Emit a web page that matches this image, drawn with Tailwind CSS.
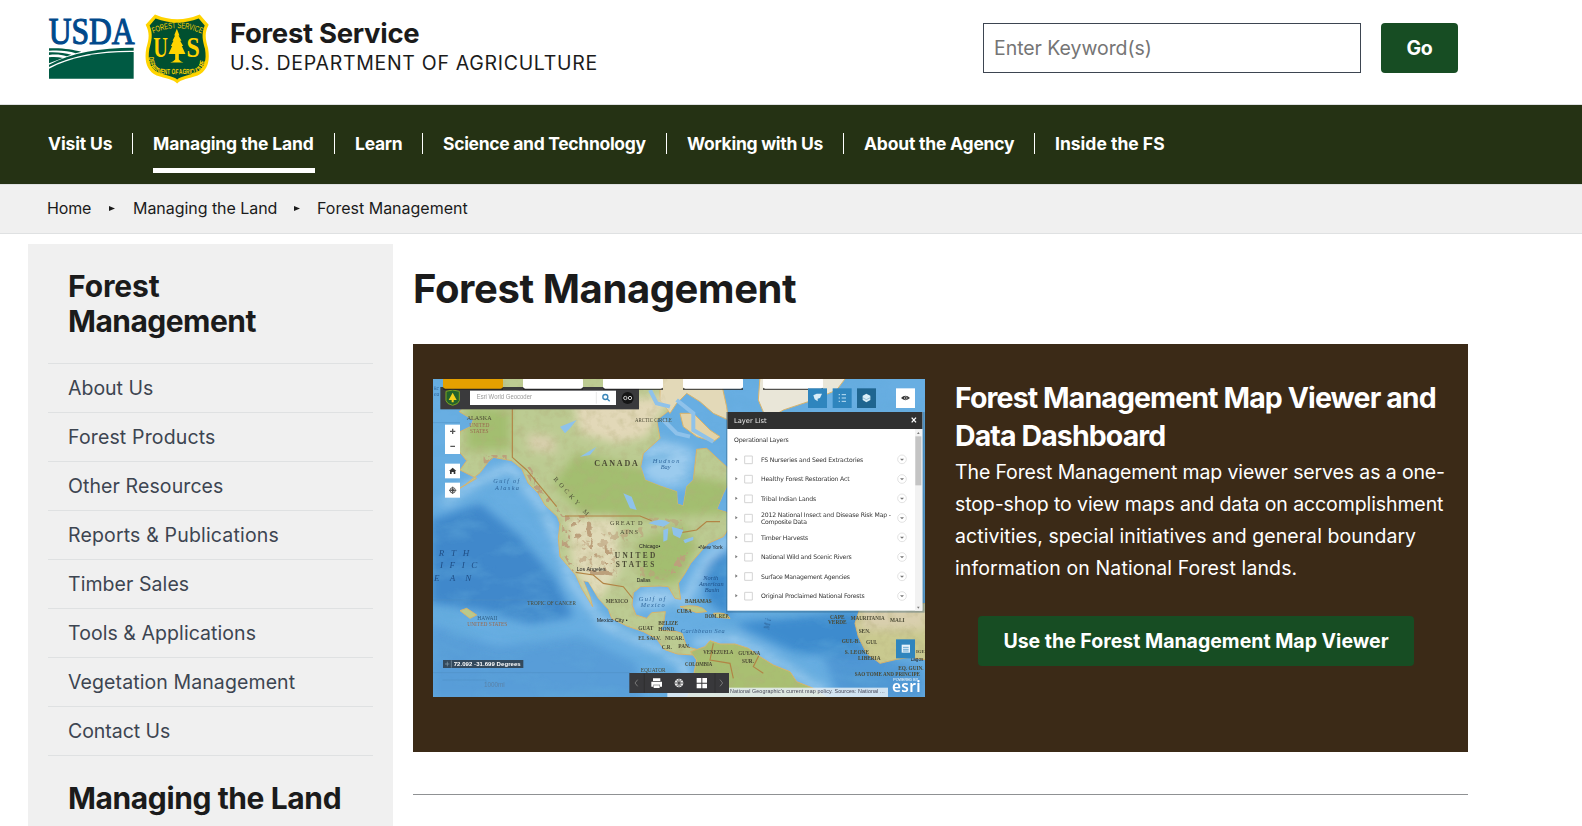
<!DOCTYPE html>
<html lang="en">
<head>
<meta charset="utf-8">
<title>Forest Management</title>
<script src="https://cdn.jsdelivr.net/npm/@tailwindcss/browser@4"></script>
</head>
<body class="h-screen overflow-hidden bg-white font-['Inter','Liberation_Sans',sans-serif] text-[19.5px] text-[#1b1b1b]">

<header class="flex h-[104px] items-start pl-12">
  <svg class="mt-[12px] h-[68px] w-[87px] overflow-visible" viewBox="24 12 261 204" aria-label="USDA">
    <text x="26" y="108" font-family="Liberation Serif, serif" font-size="111" textLength="258" lengthAdjust="spacingAndGlyphs" fill="#00498b" stroke="#00498b" stroke-width="3.5">USDA</text>
    <g fill="#005a43">
      <path d="M27 182C90 148 175 131 281 132V212H27Z"/>
      <path d="M27 170C95 134 180 119 281 119V128C190 127 105 138 27 177Z"/>
      <path d="M27 121C70 119 96 125 124 131L107 136C85 128 60 126 27 128Z"/>
      <path d="M27 133C55 132 75 135 94 140L80 145C62 139 45 139 27 141Z"/>
      <path d="M27 148C42 146 54 147 69 150L27 166Z"/>
    </g>
  </svg>
  <svg class="mt-[14px] ml-[10px] h-[70px] w-[64px]" viewBox="315 18 193 210" aria-label="Forest Service shield">
    <defs>
      <path id="arcTop" d="M340 76Q412 44 484 76"/>
      <path id="arcBottom" d="M326 148C328 216 380 194 412 200C444 194 496 216 498 148"/>
    </defs>
    <path fill="#ffd400" d="M345 19Q412 48 480 19L507 50C493 76 498 96 505 120C512 160 504 188 474 203C446 213 424 214 412 227C400 214 378 213 350 203C320 188 312 160 319 120C326 96 331 76 317 50Z"/>
    <path fill="#005030" d="M347 31Q412 56 477 31L495 52C484 78 489 98 496 123C501 156 496 181 469 194C443 204 424 205 412 215C400 205 381 204 355 194C328 181 323 156 328 123C335 98 340 78 329 52Z"/>
    <g fill="#ffd400" font-family="Liberation Sans Narrow, Liberation Sans, sans-serif">
      <text font-size="25"><textPath href="#arcTop" textLength="150" lengthAdjust="spacingAndGlyphs">FOREST SERVICE</textPath></text>
      <text font-size="23" font-weight="700"><textPath href="#arcBottom" textLength="226" lengthAdjust="spacingAndGlyphs">DEPARTMENT OF AGRICULTURE</textPath></text>
      <g font-family="Liberation Serif, serif" font-size="86" font-weight="700">
        <text x="340" y="148" textLength="44" lengthAdjust="spacingAndGlyphs">U</text>
        <text x="440" y="148" textLength="40" lengthAdjust="spacingAndGlyphs">S</text>
      </g>
      <path d="M411 62L419 82H416L425 98H421L430 114H426L437 138H417V155Q423 162 431 164H391Q400 162 406 155V138H386L397 114H393L401 98H398L406 82H403Z"/>
    </g>
  </svg>
  <div class="mt-[18px] ml-[21px] whitespace-nowrap">
    <div class="text-[27.5px] leading-[30px] font-bold tracking-[-0.3px]">Forest Service</div>
    <div class="pt-px leading-7 tracking-[0.7px]">U.S. DEPARTMENT OF AGRICULTURE</div>
  </div>
  <form class="mt-[23px] mr-[124px] ml-auto flex gap-5">
    <input class="h-[50px] w-[378px] border border-[#3d4551] px-2.5 tracking-[-0.05px] placeholder-[#757575]" placeholder="Enter Keyword(s)">
    <button type="button" class="h-[50px] w-[77px] rounded bg-[#174d23] pt-0.5 font-bold tracking-[-0.2px] text-white">Go</button>
  </form>
</header>

<nav class="h-[80px] border-t border-[#dfe1e2] bg-[#253214] pt-7 pl-12 text-[17.5px] leading-[21px] font-bold text-white">
  <ul class="flex whitespace-nowrap">
    <li class="w-[85px] border-r border-white tracking-[-0.14px]">Visit Us</li>
    <li class="w-[202px] border-r border-white pl-5"><span class="-mb-[19px] block w-[162px] border-b-5 border-white pb-[14px] tracking-[-0.16px]">Managing the Land</span></li>
    <li class="w-[88px] border-r border-white pl-5 tracking-[-0.26px]">Learn</li>
    <li class="w-[244px] border-r border-white pl-5 tracking-[-0.31px]">Science and Technology</li>
    <li class="w-[177px] border-r border-white pl-5 tracking-[-0.28px]">Working with Us</li>
    <li class="w-[191px] border-r border-white pl-5 tracking-[-0.21px]">About the Agency</li>
    <li class="pl-5">Inside the FS</li>
  </ul>
</nav>

<div class="flex h-[50px] items-center border-y border-[#dfe1e2] bg-[#f0f0f0] pb-0.5 pl-[47px] text-base whitespace-nowrap">
  <span class="w-[62px] tracking-[-0.15px]">Home</span>
  <svg class="h-[5px] w-6" viewBox="0 0 24 5"><path d="M0 0L6 2.5L0 5Z" fill="#1b1b1b"/></svg>
  <span class="w-[161px] tracking-[-0.05px]">Managing the Land</span>
  <svg class="h-[5px] w-[23px]" viewBox="0 0 23 5"><path d="M0 0L6 2.5L0 5Z" fill="#1b1b1b"/></svg>
  <span>Forest Management</span>
</div>

<div class="flex items-start pt-2.5 pl-7">
  <aside class="h-[600px] w-[365px] shrink-0 bg-[#f0f0f0] px-5">
    <h2 class="pt-[25px] pb-6 pl-5 text-[30px] leading-[35px] font-bold tracking-[-0.53px]"><span class="tracking-[-0.1px]">Forest</span><br>Management</h2>
    <ul class="border-b border-[#dfe1e2] leading-[48px] text-[#3d4551]">
      <li class="border-t border-[#dfe1e2] pl-5">About Us</li>
      <li class="border-t border-[#dfe1e2] pl-5 tracking-[0.15px]">Forest Products</li>
      <li class="border-t border-[#dfe1e2] pl-5 tracking-[0.1px]">Other Resources</li>
      <li class="border-t border-[#dfe1e2] pl-5 tracking-[0.17px]">Reports &amp; Publications</li>
      <li class="border-t border-[#dfe1e2] pl-5 tracking-[0.07px]">Timber Sales</li>
      <li class="border-t border-[#dfe1e2] pl-5 tracking-[0.07px]">Tools &amp; Applications</li>
      <li class="border-t border-[#dfe1e2] pl-5 tracking-[0.1px]">Vegetation Management</li>
      <li class="border-t border-[#dfe1e2] pl-5 tracking-[-0.05px]">Contact Us</li>
    </ul>
    <h2 class="pt-[25px] pl-5 text-[30px] leading-[35px] font-bold tracking-[-0.4px] whitespace-nowrap">Managing the Land</h2>
  </aside>

  <main class="ml-5 w-[1055px]">
    <h1 class="pt-[25px] pb-[35px] text-[40px] leading-10 font-bold tracking-[-0.4px]">Forest Management</h1>

    <section class="flex h-[408px] gap-[30px] bg-[#3b2a17] pt-[35px] pl-5 text-white">
      <svg class="h-[318px] w-[492px] shrink-0" viewBox="9 27 1476 954" preserveAspectRatio="none" aria-label="Map viewer">
        <defs>
          <filter id="soft" x="-5%" y="-5%" width="110%" height="110%"><feGaussianBlur stdDeviation="14"/></filter>
          <filter id="edge"><feGaussianBlur stdDeviation="1.3"/></filter>
          <filter id="terrain" x="0" y="0" width="100%" height="100%">
            <feTurbulence type="fractalNoise" baseFrequency="0.035" numOctaves="4" seed="8"/>
            <feColorMatrix values="0 0 0 0 .45  0 0 0 0 .42  0 0 0 0 .2  2.2 0 0 0 -1"/>
          </filter>
          <filter id="sea" x="0" y="0" width="100%" height="100%">
            <feTurbulence type="fractalNoise" baseFrequency="0.008 0.016" numOctaves="5" seed="5"/>
            <feColorMatrix values="0 0 0 0 .12  0 0 0 0 .4  0 0 0 0 .7  2.6 0 0 0 -1.15"/>
          </filter>
          <filter id="forest" x="0" y="0" width="100%" height="100%">
            <feTurbulence type="fractalNoise" baseFrequency="0.045" numOctaves="3" seed="21"/>
            <feColorMatrix values="0 0 0 0 .5  0 0 0 0 .35  0 0 0 0 .2  0 14 0 0 -7.5"/>
          </filter>
          <clipPath id="forestClip"><path d="M160 255H230V280H160ZM280 295L300 290L335 345L400 440L385 450L350 400L320 370ZM398 438L470 435L490 470L510 480L500 560L480 570L475 500L420 505L418 560L440 600L425 605L395 540ZM525 525H545V610H525ZM480 590H550V615H480ZM740 560L775 545L760 600L720 615Z"/></clipPath>
          <clipPath id="sparseClip"><path d="M440 500L640 470V500L560 520V620L450 600ZM650 440L760 450V480L660 475ZM630 590L720 600V630L630 625Z"/></clipPath>
          <path id="land" d="M70 20L110 100L88 125L130 150L122 170L90 185L84 240L110 272L90 300L140 325L60 372L105 345L150 308L175 275L190 262L245 272L275 296L295 340L325 370L345 405L382 440L390 462L385 505L390 560L420 595L437 615L455 655L488 710L480 680L460 632L475 635L505 685L535 718L545 745L590 768L640 785L680 806L702 838L742 852L790 855L800 838L770 830L756 790L740 785L690 780L700 765L706 725L665 728L650 745L618 735L606 705L610 668L632 650L690 648L715 650L735 685L752 688L745 640L765 610L782 580L812 545L835 520L880 500L900 470L900 430L860 418L880 370L900 330L900 300L830 235L800 238L790 330L770 350L760 408L742 402L740 365L690 348L645 330L632 290L640 250L690 205L680 150L720 120L700 70L720 20Z"/>
          <path id="south" d="M782 845L800 870L790 920L780 960L770 990H1200L1150 955L1100 935L1080 905L1030 885L990 860L955 835L915 822L870 822L840 812L825 830Z"/>
          <path id="africa" d="M1290 715L1275 760L1285 800L1310 850L1350 880L1400 868L1440 862L1490 870V700Z"/>
          <clipPath id="landClip"><use href="#land"/><use href="#south"/><use href="#africa"/></clipPath>
        </defs>
        <rect x="9" y="27" width="1476" height="954" fill="#68aee2"/>
        <g filter="url(#soft)">
          <path fill="#3f88cb" d="M0 450L150 400L270 500L370 620L430 740L300 760L150 720L0 700Z"/>
          <path fill="#4a90d0" d="M0 760L200 830L450 800L620 880L640 990H0Z" opacity=".55"/>
          <path fill="#3e8bce" d="M820 580L900 540L900 760L1290 720L1300 860L1100 850L930 770L830 690Z"/>
          <path fill="#4189cb" d="M1180 860L1290 830L1480 900V990H1230Z" opacity=".6"/>
          <path fill="#9bcbee" d="M640 230L690 205L790 240L780 350L700 350L640 320ZM610 670L740 650L730 700L660 720Z"/>
          <path fill="none" stroke="#9bcbee" stroke-width="26" d="M40 395L140 335L240 290L330 400L378 500L430 640L520 760L650 820L760 880L775 985M610 720L660 660L760 700L830 570L900 500M790 820L900 800L1010 860L1180 960"/>
        </g>
        <rect x="9" y="27" width="1476" height="954" filter="url(#sea)" opacity=".42"/>
        <g stroke="#d9b36a" stroke-width="3" filter="url(#edge)">
          <use href="#land" fill="#bccb92"/><use href="#south" fill="#a9bf72"/><use href="#africa" fill="#c9c98f"/>
          <path fill="#e3d9b8" d="M690 20H870L890 110L895 150L850 130L810 95L770 70L740 100L720 130L690 90Z"/>
          <path fill="#e3d3a8" d="M750 130L790 130L840 180L870 200L850 215L800 200L760 170Z"/>
          <path fill="#e9e6d8" d="M990 20H1250L1220 60L1150 90L1060 120L1010 150L985 90Z"/>
          <path fill="#bac98b" d="M750 710Q810 700 830 725L800 728ZM850 730Q890 725 900 745L860 742ZM110 715L140 735L120 745L90 722Z"/>
        </g>
        <g clip-path="url(#landClip)">
          <g filter="url(#soft)">
            <path fill="#a3be70" d="M440 250L620 290L900 340V430L700 440H460L370 340Z"/>
            <path fill="#e2d8b8" d="M430 90L720 80L650 200L560 220L450 190Z"/>
            <path fill="#a3be70" d="M110 110L240 120V240L110 240ZM620 520L760 460L800 530L740 640L640 640Z"/>
            <path fill="#e0dab8" d="M410 440H560L570 600L500 700L430 600Z"/>
            <path fill="#d9cfae" d="M290 190L370 200L380 250L300 240ZM1290 700H1490V780H1290Z"/>
          </g>
          <rect x="9" y="27" width="1476" height="954" filter="url(#terrain)" opacity=".4"/>
          <g clip-path="url(#forestClip)"><rect x="9" y="27" width="1476" height="954" filter="url(#forest)"/></g>
          <g clip-path="url(#sparseClip)" opacity=".6"><rect x="9" y="27" width="1476" height="954" filter="url(#forest)"/></g>
          <path fill="none" stroke="#b28445" stroke-width="3.5" d="M247 85V262L290 300L380 410M405 438H630L665 452M437 607L490 615L520 640L580 650L612 690M740 490L800 480L830 455L870 455M850 820L840 870L900 880L910 925M990 850L970 890L1000 910"/>
          <path fill="#8ec2ea" d="M390 170L440 150L420 175L405 190ZM450 260L500 230L480 255ZM580 370L605 380L620 420L600 415ZM655 460Q690 440 720 458L700 470ZM700 480L715 475L712 510L700 515ZM725 470L760 480L750 505L730 495ZM760 510L790 500V510L765 520Z"/>
        </g>
        <g filter="url(#edge)" fill="none" stroke="#8fc2ea" stroke-width="12"><path d="M740 90L790 130L790 180L850 215M700 150L740 190L780 200M660 60L680 100L720 110"/></g>
        <g font-family="Liberation Serif, serif" fill="#4b4a35" font-size="19">
          <g font-weight="700">
            <text x="493" y="288" font-size="24" textLength="130">CANADA</text>
            <text x="554" y="564" font-size="22" textLength="122">UNITED</text>
            <text x="557" y="590" font-size="22" textLength="116">STATES</text>
          </g>
          <text x="110" y="151" textLength="75" lengthAdjust="spacingAndGlyphs">ALASKA</text>
          <g fill="#9a6a50" font-size="16"><text x="118" y="171" textLength="60" lengthAdjust="spacingAndGlyphs">UNITED</text><text x="120" y="190" textLength="55" lengthAdjust="spacingAndGlyphs">STATES</text><text x="112" y="767" textLength="120" lengthAdjust="spacingAndGlyphs">UNITED STATES</text></g>
          <text x="615" y="157" textLength="110" lengthAdjust="spacingAndGlyphs">ARCTIC CIRCLE</text>
          <text x="292" y="706" textLength="146" lengthAdjust="spacingAndGlyphs">TROPIC OF CANCER</text>
          <text x="632" y="905" textLength="75" lengthAdjust="spacingAndGlyphs">EQUATOR</text>
          <text x="540" y="465" textLength="98">GREAT D</text><text x="570" y="493" textLength="54">AINS</text>
          <text x="370" y="328" letter-spacing="10" transform="rotate(48 370 328)">ROCKY M</text>
          <text x="142" y="749" fill="#2d5c85" textLength="60" lengthAdjust="spacingAndGlyphs">HAWAII</text>
          <g font-weight="700" font-size="16">
            <text x="527" y="699">MEXICO</text><text x="625" y="780">GUAT</text><text x="685" y="765">BELIZE</text><text x="685" y="782">HOND.</text><text x="625" y="810">EL SALV.</text><text x="705" y="809">NICAR.</text><text x="695" y="838">C.R.</text><text x="745" y="834">PAN.</text>
            <text x="740" y="730">CUBA</text><text x="825" y="743" textLength="72" lengthAdjust="spacingAndGlyphs">DOM. REP.</text><text x="765" y="699" textLength="80" lengthAdjust="spacingAndGlyphs">BAHAMAS</text><text x="765" y="889" textLength="82" lengthAdjust="spacingAndGlyphs">COLOMBIA</text><text x="820" y="851" textLength="90" lengthAdjust="spacingAndGlyphs">VENEZUELA</text><text x="925" y="855" textLength="66" lengthAdjust="spacingAndGlyphs">GUYANA</text><text x="936" y="878">SUR.</text>
            <text x="1200" y="747">CAPE</text><text x="1194" y="763">VERDE</text><text x="1262" y="750" textLength="102" lengthAdjust="spacingAndGlyphs">MAURITANIA</text><text x="1380" y="757">MALI</text><text x="1286" y="789">SEN.</text><text x="1235" y="818">GUI.-B.</text><text x="1308" y="821">GUI.</text><text x="1244" y="851">S. LEONE</text><text x="1284" y="870">LIBERIA</text><text x="1405" y="901" textLength="76" lengthAdjust="spacingAndGlyphs">EQ. GUIN.</text><text x="1274" y="918" textLength="196" lengthAdjust="spacingAndGlyphs">SAO TOME AND PRINCIPE</text><text x="1458" y="848" font-size="14">IGE</text>
          </g>
          <g font-family="Liberation Sans, sans-serif" font-size="16" fill="#222"><text x="627" y="535">Chicago•</text><text x="805" y="538">•New York</text><text x="500" y="755">Mexico City •</text><text x="440" y="604">Los Angeles</text><text x="620" y="637" font-size="15">Dallas</text><text x="1442" y="873" font-size="14">Lagos</text></g>
          <g font-style="italic" fill="#2f669b">
            <text x="190" y="340" textLength="78">Gulf of</text><text x="195" y="360" textLength="72">Alaska</text>
            <text x="668" y="279" textLength="80">Hudson</text><text x="692" y="297">Bay</text>
            <text x="626" y="694" textLength="80">Gulf of</text><text x="632" y="712" textLength="72">Mexico</text>
            <text x="752" y="789" textLength="132">Caribbean Sea</text>
            <g fill="#1f4f85"><text x="820" y="629">North</text><text x="807" y="647">American</text><text x="824" y="665">Basin</text></g>
            <g font-size="27" fill="#204f86"><text x="26" y="557" textLength="92">RTH</text><text x="30" y="595" textLength="112">IFIC</text><text x="12" y="633" textLength="112">EAN</text></g>
            <text x="1008" y="768" transform="rotate(-80 1020 768)" font-size="24">M i</text>
            <text x="12" y="60" font-size="17">kc</text><text x="12" y="79" font-size="17">ea</text>
          </g>
          <text x="162" y="952" font-family="Liberation Sans, sans-serif" font-size="19" fill="#5a83a8">1000mi</text>
        </g>
        <path d="M38 930H168V940M9 908H600M9 158H90M300 690H9" fill="none" stroke="#4d8fc0" stroke-width="1.5"/>

        <!-- search bar -->
        <rect x="31" y="51" width="596" height="67" fill="#3a3a3c"/>
        <path d="M48 64L68 60L88 64V92Q86 102 68 106Q50 102 48 92Z" fill="#23632c" stroke="#7fa41f" stroke-width="3"/>
        <path d="M68 68L80 90H71V97H65V90H56Z" fill="#f5d21e"/>
        <rect x="120" y="62" width="438" height="43" fill="#fff"/>
        <text x="140" y="86" font-family="Liberation Sans, sans-serif" font-size="19" fill="#999" textLength="166" lengthAdjust="spacingAndGlyphs">Esri World Geocoder</text>
        <path d="M499 66V101" stroke="#ddd" stroke-width="2"/>
        <g fill="none" stroke="#3a86b8" stroke-width="4"><circle cx="526" cy="81" r="7.5"/><path d="M532 87L539 94"/></g>
        <circle cx="593" cy="84" r="18" fill="#151515"/>
        <g fill="none" stroke="#c9c9c9" stroke-width="3"><circle cx="586" cy="84" r="5"/><circle cx="600" cy="84" r="5"/></g>
        <!-- image carousel tabs -->
        <path d="M40 57H219M279 57H459M519 57H699M759 57H939M999 57H1179" stroke="#222" stroke-width="5"/>
        <g fill="#fff"><rect x="39" y="22" width="180" height="34" rx="7" fill="#e5a000"/><rect x="279" y="22" width="180" height="34" rx="7"/><rect x="519" y="22" width="180" height="34" rx="7"/><rect x="759" y="22" width="180" height="34" rx="7"/><rect x="999" y="22" width="180" height="34" rx="7"/></g>
        <!-- zoom, home and locate buttons -->
        <g fill="#fff"><rect x="45" y="164" width="45" height="88"/><rect x="45" y="281" width="45" height="44"/><rect x="45" y="338" width="45" height="45"/></g>
        <path d="M60 184H76M68 176V192M61 229H75" stroke="#555" stroke-width="4"/>
        <path d="M68 293L79 303H76V312H71V306H65V312H60V303H57Z" fill="#333"/>
        <g fill="none" stroke="#555" stroke-width="3"><circle cx="68" cy="361" r="8"/><path d="M68 350V372M57 361H79"/></g><circle cx="68" cy="361" r="4" fill="#444"/>
        <!-- widget buttons -->
        <rect x="1134" y="55" width="57" height="59" fill="#2f85be"/><rect x="1208" y="55" width="57" height="59" fill="#2f85be"/><rect x="1281" y="55" width="57" height="59" fill="#1f6590"/><rect x="1398" y="55" width="57" height="59" fill="#fff"/>
        <path d="M1150 76L1160 71H1176L1170 84L1163 86V94L1154 88Z" fill="#d8ecf8"/>
        <path d="M1226 74H1230M1235 74H1248M1226 84H1230M1235 84H1248M1226 94H1230M1235 94H1248" stroke="#bfe0f4" stroke-width="3"/>
        <path d="M1309 71L1321 77V90L1309 97L1298 90V77Z" fill="#d9edf7"/><path d="M1298 83L1309 89L1321 83" fill="none" stroke="#76a9c6" stroke-width="2"/>
        <path d="M1413 84Q1426 70 1440 84Q1426 97 1413 84Z" fill="#333"/><circle cx="1427" cy="84" r="4" fill="none" stroke="#ccc" stroke-width="2"/>
        <!-- layer list -->
        <rect x="888" y="126" width="596" height="602" fill="#205070" opacity=".35"/>
        <rect x="892" y="126" width="585" height="596" fill="#fff"/><rect x="892" y="126" width="585" height="51" fill="#303030"/>
        <path d="M1445 143L1458 157M1458 143L1445 157" stroke="#fff" stroke-width="4"/>
        <rect x="1455" y="177" width="22" height="545" fill="#f2f2f2"/><rect x="1456" y="199" width="18" height="147" fill="#c4c4c4"/>
        <path d="M1465 186L1469 192H1461ZM1465 716L1469 710H1461Z" fill="#777"/>
        <g font-family="DejaVu Sans, sans-serif" font-size="18.5" fill="#333">
          <text x="912" y="158" fill="#eee" font-size="20" textLength="98">Layer List</text>
          <text x="912" y="217" textLength="164">Operational Layers</text>
          <text x="993" y="275" textLength="307">FS Nurseries and Seed Extractories</text>
          <text x="993" y="334" textLength="266">Healthy Forest Restoration Act</text>
          <text x="993" y="392" textLength="166">Tribal Indian Lands</text>
          <text x="993" y="440" textLength="390">2012 National Insect and Disease Risk Map -</text>
          <text x="993" y="462" textLength="138">Composite Data</text>
          <text x="993" y="509" textLength="142">Timber Harvests</text>
          <text x="993" y="567" textLength="272">National Wild and Scenic Rivers</text>
          <text x="993" y="626" textLength="267">Surface Management Agencies</text>
          <text x="993" y="684" textLength="311">Original Proclaimed National Forests</text>
        </g>
        <g fill="none" stroke="#d4d4d4" stroke-width="3">
          <path d="M944 258h23v23h-23zM944 316h23v23h-23zM944 375h23v23h-23zM944 433h23v23h-23zM944 492h23v23h-23zM944 550h23v23h-23zM944 608h23v23h-23zM944 667h23v23h-23z"/>
          <g stroke-width="2"><circle cx="1416" cy="268" r="13"/><circle cx="1416" cy="327" r="13"/><circle cx="1416" cy="385" r="13"/><circle cx="1416" cy="444" r="13"/><circle cx="1416" cy="502" r="13"/><circle cx="1416" cy="561" r="13"/><circle cx="1416" cy="619" r="13"/><circle cx="1416" cy="678" r="13"/></g>
        </g>
        <path fill="#777" d="M1410 266h12l-6 6zM1410 325h12l-6 6zM1410 383h12l-6 6zM1410 442h12l-6 6zM1410 500h12l-6 6zM1410 559h12l-6 6zM1410 617h12l-6 6zM1410 676h12l-6 6zM916 263v10l7-5zM916 321v10l7-5zM916 380v10l7-5zM916 438v10l7-5zM916 497v10l7-5zM916 555v10l7-5zM916 613v10l7-5zM916 672v10l7-5z"/>
        <!-- coordinates, toolbar, attribution -->
        <rect x="39" y="870" width="241" height="24" fill="#33495c"/>
        <path d="M64 871V893M45 882H58M52 875V889" stroke="#8aa0b0" stroke-width="2"/>
        <text x="71" y="889" font-family="Liberation Sans, sans-serif" font-weight="700" font-size="18" fill="#fff" textLength="201">72.092 -31.699 Degrees</text>
        <rect x="712" y="953" width="662" height="28" fill="#e6eef4" opacity=".85"/>
        <text x="900" y="970" font-family="Liberation Sans, sans-serif" font-size="16" fill="#445" textLength="464">National Geographic's current map policy. Sources: National ...</text>
        <rect x="598" y="909" width="299" height="60" fill="#38383b"/>
        <path d="M643 910V968M855 910V968" stroke="#2a2a2a" stroke-width="2"/>
        <path d="M623 929L615 939L623 949M870 929L878 939L870 949" fill="none" stroke="#777" stroke-width="3"/>
        <path d="M669 925H691V933H669ZM664 935H696V950H690V944H670V950H664ZM671 946H689V954H671Z" fill="#fff"/>
        <circle cx="747" cy="939" r="13" fill="#eee"/><path d="M735 939H759M747 927V951M739 930Q752 939 739 949M755 930Q743 939 755 949" fill="none" stroke="#38383b" stroke-width="2.5"/>
        <path d="M800 924h14v14h-14zM817 924h14v14h-14zM800 941h14v14h-14zM817 941h14v14h-14z" fill="#fff"/>
        <rect x="1398" y="808" width="57" height="57" fill="#2f85be"/><path d="M1415 824H1440V848H1415Z" fill="#e5f2fa"/><path d="M1419 832H1436M1419 838H1436M1419 843H1436" stroke="#2f85be" stroke-width="2"/>
        <text x="1386" y="965" font-family="Noto Sans, sans-serif" font-size="46" font-weight="600" fill="#fff" textLength="86">esri</text>
        <text x="1390" y="934" font-family="Liberation Sans, sans-serif" font-size="11" fill="#fff">POWERED BY</text>
      </svg>

      <div class="w-[493px] whitespace-nowrap">
        <h3 class="text-[28.5px] leading-[38px] font-bold tracking-[-0.9px]">Forest Management Map Viewer and<br>Data Dashboard</h3>
        <p class="pt-px leading-8">
          <span class="block tracking-[-0.12px]">The Forest Management map viewer serves as a one-</span>
          <span class="block tracking-[-0.1px]">stop-shop to view maps and data on accomplishment</span>
          <span class="block tracking-[0.06px]">activities, special initiatives and general boundary</span>
          <span class="block tracking-[0.12px]">information on National Forest lands.</span>
        </p>
        <a class="mt-8 ml-[23px] block h-[50px] w-[436px] rounded bg-[#174d23] text-center leading-[50px] font-bold">Use the Forest Management Map Viewer</a>
      </div>
    </section>
    <hr class="mt-[42px] border-t border-[#8f9193]">
  </main>
</div>
</body>
</html>
